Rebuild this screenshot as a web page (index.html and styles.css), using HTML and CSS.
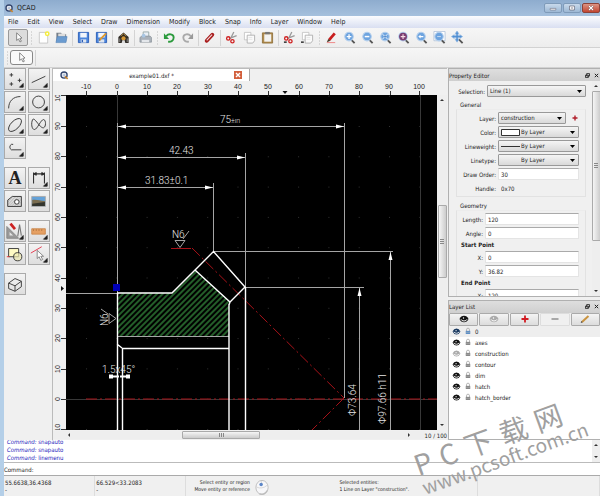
FILE: index.html
```html
<!DOCTYPE html>
<html lang="en">
<head>
    <meta charset="UTF-8">
    <meta name="viewport" content="width=device-width, initial-scale=1.0">
    <title>QCAD</title>
    <link rel="stylesheet" href="styles.css">
</head>
<body>
    <!-- Shared icons -->
    <svg class="sprite" aria-hidden="true">
        <symbol id="i-logo" viewBox="0 0 10 10"><circle cx="4.5" cy="4.5" r="3.4" fill="#fff" stroke="#34466e" stroke-width="1.5"/><path d="M4.5 2.5v4M2.5 4.5h4" stroke="#7d94bd" stroke-width=".7"/><path d="M5.5 6l3 2.8" stroke="#c58432" stroke-width="1.8"/></symbol>
        <symbol id="i-cursor" viewBox="0 0 14 14"><path d="M5 2v8.2l2-1.7 1.6 3.3 1.5-.8-1.7-3.1 2.4-.3z" fill="#fff" stroke="#666" stroke-width=".8"/></symbol>
        <symbol id="i-zoom" viewBox="0 0 14 14"><path d="M8.5 9l4 4" stroke="#555" stroke-width="2"/><circle cx="6.5" cy="6" r="4.6" fill="#6ea4df" stroke="#b4cfed" stroke-width="1.2"/></symbol>
        <symbol id="i-cut" viewBox="0 0 14 14"><path d="M9.5 1L6 8M12.5 5L5 8" stroke="#999" stroke-width="1.4"/><circle cx="3.5" cy="8" r="1.8" fill="none" stroke="#cf2020" stroke-width="1.4"/><circle cx="8" cy="11" r="1.8" fill="none" stroke="#cf2020" stroke-width="1.4"/></symbol>
        <symbol id="i-copy" viewBox="0 0 14 14"><path d="M1.500 1.500h7v8h-7z" fill="#fff" stroke="#bbb" stroke-width=".8"/><path d="M4.500 4.500h8v6l-2 2.500h-6z" fill="#fafafa" stroke="#aaa" stroke-width=".9"/><path d="M6 7h4M6 9h4" stroke="#ddd" stroke-width=".7"/></symbol>
        <symbol id="i-eye" viewBox="0 0 10 8"><path d="M.5 4Q2 .7 5 .7T9.500 4Q8 7.300 5 7.300T.5 4z" fill="currentColor"/><path d="M2 4.300Q2.600 6 5 6T8 4.300" fill="none" stroke="#fff" stroke-width="1"/><circle cx="4.500" cy="3" r=".7" fill="#fff"/></symbol>
        <symbol id="i-lock" viewBox="0 0 8 10"><path d="M2 5V3.500a2 2.300 0 0 1 4 0V5" fill="none" stroke="#aaa" stroke-width="1.100"/><path d="M1 4.800h6v4.200H1z" fill="currentColor"/><path d="M1 6.800h6" stroke="#bbb" stroke-width=".6"/></symbol>
        <symbol id="i-float" viewBox="0 0 6 6"><path d="M2 .7h3.400v3H2zM.6 2.500H4v3H.6z" fill="#ddd" stroke="#222" stroke-width="1"/></symbol>
        <symbol id="i-close" viewBox="0 0 6 6"><path d="M1 1l4 4M5 1L1 5" stroke="#222" stroke-width="1.200"/></symbol>
        <symbol id="i-corner" viewBox="0 0 22 22"><path d="M20 16v4h-4z" fill="#111"/></symbol>
    </svg>

    <div class="app">
        <!-- Title bar -->
        <header class="title-bar">
            <svg class="logo"><use href="#i-logo"/></svg>
            <h1 class="title">QCAD</h1>
            <div class="window-buttons">
                <button aria-label="Minimize"><svg viewBox="0 0 18 10"><path d="M5.500 5.500h7v2h-7z" fill="#fff" stroke="#667" stroke-width=".7"/></svg></button>
                <button aria-label="Maximize"><svg viewBox="0 0 18 10"><path d="M6 2.500h6v5H6z" fill="#fff" stroke="#556" stroke-width=".8"/><path d="M8 4.500h2v1H8z" fill="#667"/></svg></button>
                <button class="close" aria-label="Close"><svg viewBox="0 0 18 10"><path d="M6.500 2.500l5 5M11.500 2.500l-5 5" stroke="#644" stroke-width="2.400"/><path d="M6.500 2.500l5 5M11.500 2.500l-5 5" stroke="#fff" stroke-width="1.500"/></svg></button>
            </div>
        </header>

        <!-- Menu -->
        <nav class="menu-bar">
            <a href="#">File</a>
            <a href="#">Edit</a>
            <a href="#">View</a>
            <a href="#">Select</a>
            <a href="#">Draw</a>
            <a href="#">Dimension</a>
            <a href="#">Modify</a>
            <a href="#">Block</a>
            <a href="#">Snap</a>
            <a href="#">Info</a>
            <a href="#">Layer</a>
            <a href="#">Window</a>
            <a href="#">Help</a>
        </nav>

        <!-- Main toolbar -->
        <div class="toolbar">
            <button class="active" aria-label="Select"><svg><use href="#i-cursor"/></svg></button>
            <span class="handle"></span>
            <button aria-label="New"><svg viewBox="0 0 14 14"><path d="M2.500 1.500h9v11.500h-9z" fill="#fff" stroke="#bbb" stroke-width=".8"/><circle cx="11" cy="3" r="2.600" fill="#f4ec3c"/><circle cx="11" cy="3" r="1" fill="#fff"/></svg></button>
            <button aria-label="Open"><svg viewBox="0 0 14 14"><path d="M1.500 2h5l1 1.500H12V11H1.500z" fill="#777f88"/><path d="M3.500 2.800H11v4H3.500z" fill="#ddd"/><path d="M2.500 6H13l-1.200 6.500H1z" fill="#6a9bd0" stroke="#4f7fb5" stroke-width=".6"/></svg></button>
            <span class="separator"></span>
            <button aria-label="Save"><svg viewBox="0 0 14 14"><path d="M1.500 1.500h11v11h-11z" fill="#4c86dc" stroke="#2c5fb8"/><path d="M3.500 2h7v5h-7z" fill="#f3f6fb"/><path d="M4 9h6v3.500H4z" fill="#dfe6f0"/><path d="M5 9.500h1.500v2.500H5z" fill="#2c5fb8"/></svg></button>
            <button aria-label="Save as"><svg viewBox="0 0 14 14"><path d="M1.500 1.500h11v11h-11z" fill="#4c86dc" stroke="#2c5fb8"/><path d="M3.500 2h7v5h-7z" fill="#f3f6fb"/><path d="M4 9h6v3.500H4z" fill="#dfe6f0"/><path d="M5 9.500L12 2.500" stroke="#e19a2d" stroke-width="2"/><path d="M4 10.500l1-1.500 1 1z" fill="#333"/></svg></button>
            <span class="separator"></span>
            <button aria-label="Export"><svg viewBox="0 0 14 14"><path d="M1.500 13V6.500L7 1.500l5.500 5V13z" fill="#2d2923"/><path d="M4 5.500L7 3l3 2.500" fill="none" stroke="#b5873c"/><circle cx="7" cy="8" r="2.300" fill="#d59735"/><path d="M5 13l.8-3h2.400L9 13z" fill="#ddd"/><path d="M3 8v4M11 8v4" stroke="#aaa" stroke-width=".8"/></svg></button>
            <span class="separator"></span>
            <button aria-label="Print"><svg viewBox="0 0 14 14"><path d="M4.500 1h6v6h-6z" fill="#e9eff6" stroke="#9aa"/><path d="M1 7l2-1.500h9L13.500 7v5H1z" fill="#aab1b9" stroke="#858c94" stroke-width=".7"/><path d="M3 9.500h8V12H3z" fill="#e4e7eb"/><circle cx="5" cy="5" r="2" fill="#a9c6e3"/></svg></button>
            <span class="handle"></span>
            <button aria-label="Undo"><svg viewBox="0 0 14 14"><path d="M3.500 5.500C6 2.500 11.500 3 11.500 7S8 11.800 5.500 11.500" fill="none" stroke="#2b9a3c" stroke-width="2"/><path d="M1 2.500v6h5.500z" fill="#2b9a3c"/></svg></button>
            <button aria-label="Redo"><svg viewBox="0 0 14 14"><path d="M10.500 5.500C8 2.500 2.500 3 2.500 7S6 11.800 8.500 11.500" fill="none" stroke="#aaa" stroke-width="2"/><path d="M13 2.500v6H7.500z" fill="#999"/></svg></button>
            <span class="separator"></span>
            <button aria-label="Delete"><svg viewBox="0 0 14 14"><path d="M4 10.500L10 4" stroke="#a81c1c" stroke-width="4.200" stroke-linecap="round"/><path d="M4 10L9.800 3.800" stroke="#f3dada" stroke-width="1.200"/></svg></button>
            <span class="separator"></span>
            <button aria-label="Cut"><svg><use href="#i-cut"/></svg></button>
            <button aria-label="Copy"><svg><use href="#i-copy"/></svg></button>
            <button aria-label="Paste"><svg viewBox="0 0 14 14"><path d="M1.500 2h11v11h-11z" fill="#b18c4e" stroke="#86662f" stroke-width=".8"/><path d="M3.500 3.500h7.500v8H3.500z" fill="#f3f3f1"/><path d="M4.500 1h5v2.500h-5z" fill="#777"/></svg></button>
            <span class="separator"></span>
            <button aria-label="Cut with reference"><svg viewBox="0 0 14 14"><use href="#i-cut"/><path d="M1 12h3" stroke="#222" stroke-width="1.500"/></svg></button>
            <button aria-label="Copy with reference"><svg viewBox="0 0 14 14"><use href="#i-copy"/><path d="M0 12h3" stroke="#222" stroke-width="1.500"/></svg></button>
            <span class="handle"></span>
            <button aria-label="Draft"><svg viewBox="0 0 14 14"><path d="M4.500 9.500L10.500 2.500" stroke="#c81e1e" stroke-width="3"/><path d="M2 12l1.500-3.500 2.400 2z" fill="#432"/><path d="M2 12.500h9" stroke="#e66" stroke-width=".8"/></svg></button>
            <button aria-label="Zoom in"><svg viewBox="0 0 14 14"><use href="#i-zoom"/><path d="M4 6h5M6.500 3.500v5" stroke="#fff" stroke-width="1.400"/></svg></button>
            <button aria-label="Zoom out"><svg viewBox="0 0 14 14"><use href="#i-zoom"/><path d="M4 6h5" stroke="#fff" stroke-width="1.600"/></svg></button>
            <button aria-label="Auto zoom"><svg viewBox="0 0 14 14"><use href="#i-zoom"/><path d="M4 3.500l5 5M9 3.500l-5 5" stroke="#fff" stroke-width="1"/><circle cx="6.500" cy="6" r="1" fill="#4b7fc0"/></svg></button>
            <button aria-label="Zoom to selection"><svg viewBox="0 0 14 14"><use href="#i-zoom"/><circle cx="6.500" cy="6" r="4.200" fill="#7a3c70"/><path d="M4 6h5M6.500 3.500v5" stroke="#f7dce6" stroke-width="1.200"/></svg></button>
            <button aria-label="Previous view"><svg viewBox="0 0 14 14"><use href="#i-zoom"/><path d="M3.500 6l2.500-2v1.300h3v1.400H6V8z" fill="#fff"/></svg></button>
            <button aria-label="Window zoom"><svg viewBox="0 0 14 14"><path d="M1 .500h12v10H1z" fill="#fff" stroke="#a9bdd6" stroke-width=".8"/><use href="#i-zoom"/><path d="M4.500 6h4" stroke="#cfe0f4"/></svg></button>
            <button aria-label="Pan zoom"><svg viewBox="0 0 14 14"><path d="M8.500 9l4 4" stroke="#555" stroke-width="2"/><path d="M6.500 0l2 3h-1v2h2V4l3 2-3 2V7h-2v2h1l-2 3-2-3h1V7h-2v1l-3-2 3-2v1h2V3h-1z" fill="#4f8fd3" stroke="#94b9e2" stroke-width=".8"/></svg></button>
        </div>

        <!-- Options toolbar -->
        <div class="toolbar options">
            <span class="handle"></span>
            <button class="reset" aria-label="Reset"><svg><use href="#i-cursor"/></svg></button>
            <span class="separator"></span>
        </div>

        <main class="workspace">
            <!-- Tool palette -->
            <aside class="palette">
                <div class="tool-group">
                    <button aria-label="Point"><svg viewBox="0 0 22 22"><path d="M5 6.500h4M7 4.500v4M5 16.500h4M7 14.500v4M14 12.500h4M16 10.500v4"/><use href="#i-corner"/></svg></button>
                    <button aria-label="Line"><svg viewBox="0 0 22 22"><path d="M3 15L18 8"/><use href="#i-corner"/></svg></button>
                    <button aria-label="Arc"><svg viewBox="0 0 22 22"><path d="M4 18C4 10 9 5 17 5"/><use href="#i-corner"/></svg></button>
                    <button aria-label="Circle"><svg viewBox="0 0 22 22"><circle cx="10.500" cy="11" r="6.500"/><use href="#i-corner"/></svg></button>
                    <button aria-label="Ellipse"><svg viewBox="0 0 22 22"><ellipse cx="11" cy="11" rx="9" ry="4.500" transform="rotate(-45 11 11)"/><use href="#i-corner"/></svg></button>
                    <button aria-label="Spline"><svg viewBox="0 0 22 22"><path d="M4 5C2 9 3 16 6 16S13 5 16 5S19 15 15 14S6 2 4 5z"/><use href="#i-corner"/></svg></button>
                    <button aria-label="Polyline"><svg viewBox="0 0 22 22"><path d="M9 7H7a3.500 3.500 0 0 0 0 6h11"/><use href="#i-corner"/></svg></button>
                </div>
                <div class="tool-group">
                    <button class="text-tool">A</button>
                    <button aria-label="Dimension"><svg viewBox="0 0 22 22"><path d="M5 17V5M17 17V5M5 6.500h12" stroke-width="1.200"/><path d="M5 6.500l3-1.500v3zM17 6.500L14 5v3z" fill="#222"/><use href="#i-corner"/></svg></button>
                    <button aria-label="Hatch"><svg viewBox="0 0 22 22"><path d="M3 17v-7l5-4h10v11z" fill="url(#metal)"/><circle cx="13" cy="12" r="2.500" fill="#fff"/></svg></button>
                    <button aria-label="Image"><svg viewBox="0 0 22 22"><path d="M3 6h15v11H3z" fill="#64a2d9" stroke="#aaa"/><path d="M3.500 10c5-1 8 1 14 1v5.500h-14z" fill="#7a6d50" stroke="none"/><path d="M3.500 14l14-2v4.500h-14z" fill="#33352e" stroke="none"/></svg></button>
                </div>
                <div class="tool-group">
                    <button aria-label="Modify"><svg viewBox="0 0 22 22"><path d="M2 6v13h13z" fill="#999" stroke="#888"/><path d="M5 12v4h4z" fill="#e4e4e4" stroke="none"/><path d="M6 3l5 6" stroke="#c22" stroke-width="3"/><path d="M16 4l-2 13M16 4l2 12" stroke="#777" stroke-width="1.200"/><use href="#i-corner"/></svg></button>
                    <button aria-label="Measure"><svg viewBox="0 0 22 22"><path d="M3 8.500h15v6H3z" fill="#e5a063" stroke="#c67f40" stroke-width=".8"/><path d="M5 9v2M8 9v2M11 9v2M14 9v2" stroke="#96602e" stroke-width=".6"/><use href="#i-corner"/></svg></button>
                    <button aria-label="Block"><svg viewBox="0 0 22 22"><path d="M4 5h11v9H4z" fill="#fffbc4"/><circle cx="14" cy="14" r="4.500" fill="#eee9b0" fill-opacity=".7"/><path d="M2 14h3" stroke="#e33"/></svg></button>
                    <button aria-label="Select tools"><svg viewBox="0 0 22 22"><path d="M2 10L14 3" stroke="#e33248"/><path d="M9 7v9l2.200-2 1.800 4 2-1-2-3.500h3z" fill="#fff" stroke="#666" stroke-width=".8"/><use href="#i-corner"/></svg></button>
                </div>
                <div class="tool-group">
                    <button aria-label="Solid"><svg viewBox="0 0 22 22"><path d="M4 10l7-5 7 3v6l-7 5-7-3zM4 10l7 3 7-5M11 13v6"/></svg></button>
                </div>
            </aside>

            <!-- Document window -->
            <section class="document">
                <div class="tab-bar">
                    <div class="tab">
                        <svg class="logo"><use href="#i-logo"/></svg>
                        <span>example01.dxf *</span>
                        <button aria-label="Close tab"><svg viewBox="0 0 8 8"><path d="M2 2l4 4M6 2L2 6" stroke="#fff" stroke-width="1.400"/></svg></button>
                    </div>
                </div>
                <div class="view">
                    <svg class="ruler-top">
                        <path d="M20.500 10v5M51.500 10v5M81.500 10v5M111.500 10v5M142.500 10v5M172.500 10v5M202.500 10v5M233.500 10v5M263.500 10v5M293.500 10v5M324.500 10v5M353.500 10v5" stroke="#333"/>
                        <path d="M216.500 10h5l-2.500 3z" fill="#111"/>
                        <g text-anchor="middle">
                            <text x="20" y="8">-10</text><text x="51" y="8">0</text><text x="81" y="8">10</text><text x="111" y="8">20</text>
                            <text x="142" y="8">30</text><text x="172" y="8">40</text><text x="202" y="8">50</text><text x="233" y="8">60</text>
                            <text x="263" y="8">70</text><text x="293" y="8">80</text><text x="323" y="8">90</text><text x="353" y="8">100</text>
                        </g>
                    </svg>
                    <svg class="ruler-left">
                        <path d="M8 .5h5M8 31.500h5M8 61.500h5M8 92.500h5M8 122.500h5M8 152.500h5M8 183.500h5M8 213.500h5M8 243.500h5M8 274.500h5M8 304.500h5M8 334.500h5" stroke="#333"/>
                        <path d="M8 191v5l3-2.500z" fill="#111"/>
                        <g text-anchor="middle">
                            <text transform="translate(7 1) rotate(-90)">100</text><text transform="translate(7 31) rotate(-90)">90</text>
                            <text transform="translate(7 61) rotate(-90)">80</text><text transform="translate(7 92) rotate(-90)">70</text>
                            <text transform="translate(7 122) rotate(-90)">60</text><text transform="translate(7 152) rotate(-90)">50</text>
                            <text transform="translate(7 183) rotate(-90)">40</text><text transform="translate(7 213) rotate(-90)">30</text>
                            <text transform="translate(7 243) rotate(-90)">20</text><text transform="translate(7 274) rotate(-90)">10</text>
                            <text transform="translate(7 304) rotate(-90)">0</text><text transform="translate(7 334) rotate(-90)">-10</text>
                        </g>
                    </svg>

                    <svg class="drawing">
                        <defs>
                            <pattern id="hatch" width="4" height="4" patternUnits="userSpaceOnUse" patternTransform="rotate(45)"><path d="M1 0v4" stroke="#36903f" stroke-width="1.300"/></pattern>
                            <pattern id="metal" width="3" height="3" patternUnits="userSpaceOnUse"><path d="M0 0h3v3H0z" fill="#ddd"/><path d="M0 3l3-3" stroke="#999" stroke-width=".6"/></pattern>
                            <pattern id="grid" x="20" y="31" width="30.300" height="30.300" patternUnits="userSpaceOnUse"><path d="M0 0h1v1H0z" fill="#333"/></pattern>
                        </defs>
                        <rect class="paper" width="100%" height="100%"/>
                        <rect width="100%" height="100%" fill="url(#grid)"/>
                        <path class="axis" d="M51.500 0v340M354.500 0v340M0 304.500h371"/>

                        <!-- Hatched section -->
                        <path d="M51 198h55l23-23 35 32-1 3v31H51z" fill="url(#hatch)"/>

                        <!-- Center lines -->
                        <path class="center" d="M20 304h360M126 153L278 303M278 303L244 337"/>
                        <path class="center solid" d="M105 153.500h20M51.500 292v24"/>

                        <!-- Dimension lines -->
                        <path class="dim" d="M51.500 28v312M0 198.500h51M51 31.500h227M51 62.500h128M51 92.500h96M278.500 28v275M179.500 58v134M147.500 88v68M147 156.500h180M179 192.500h119M293.500 192v148M324.500 156v184M51 241.500h112"/>
                        <path class="arrow" d="M52 31.500l8-2v4zM278 31.500l-8-2v4zM52 62.500l8-2v4zM179 62.500l-8-2v4zM52 92.500l8-2v4zM147 92.500l-8-2v4zM293.500 193l-2 8h4zM324.500 157l-2 8h4z"/>
                        <path class="arrow" d="M43 279.500h4v1h6v2h-6v1h-4zM64 279.500h-4v1h-6v2h6v1h4z"/>

                        <!-- Contour -->
                        <path class="contour" d="M51.500 198v142M51 198h55L147.500 156.500 179 192l-15 15-35-32M164 207l-1 3M163 209v131M179.500 192v148M56.500 253v87M51 249l5 4M56 253.500h107"/>

                        <!-- Surface marks -->
                        <path class="dim" d="M109 145.500h10l-5 7zM117 144l6-8M43 218.500v10l7-5zM42 219l-7-5"/>

                        <g class="labels">
                            <text x="154" y="28">75<tspan class="tolerance">±ın</tspan></text>
                            <text x="103" y="59">42.43</text>
                            <text x="79" y="89">31.83±0.1</text>
                            <text x="106" y="143">N6</text>
                            <text x="36" y="278">1.5x45°</text>
                            <text transform="translate(42 231) rotate(-90)">N6</text>
                            <text transform="translate(290 321) rotate(-90)">Φ73.64</text>
                            <text transform="translate(320 329) rotate(-90)">Φ97.66 h11</text>
                        </g>
                        <path class="grip" d="M47 189h7v7h-7z"/>
                    </svg>

                    <div class="scroll vertical doc-vertical">
                        <i class="up"></i><span class="before"></span><b class="thumb"></b><span class="after"></span><i class="down"></i>
                    </div>
                    <div class="doc-bottom">
                        <div class="scroll horizontal">
                            <i class="left"></i><span class="before"></span><b class="thumb"></b><span class="after"></span><i class="right"></i>
                        </div>
                        <span>10 / 100</span>
                    </div>
                </div>
            </section>

            <aside class="docks">
                <!-- Property editor -->
                <section class="dock property-dock">
                    <header class="dock-title">
                        <h2>Property Editor</h2>
                        <button aria-label="Float"><svg><use href="#i-float"/></svg></button>
                        <button aria-label="Close"><svg><use href="#i-close"/></svg></button>
                    </header>
                    <div class="property-body">
                        <form class="properties">
                            <div class="selection-row">
                                <label for="selection">Selection:</label>
                                <select id="selection"><option>Line (1)</option></select>
                            </div>
                            <h3>General</h3>
                            <div class="group general">
                                <label for="layer">Layer:</label>
                                <div class="layer-field">
                                    <select id="layer"><option>construction</option></select>
                                    <button type="button" aria-label="Add layer"><svg viewBox="0 0 8 8"><path d="M1.500 4h5M4 1.500v5" stroke="#b11f2b" stroke-width="1.400"/></svg></button>
                                </div>
                                <label for="color">Color:</label>
                                <select id="color" class="swatch"><option>By Layer</option></select>
                                <label for="lineweight">Lineweight:</label>
                                <select id="lineweight" class="weight"><option>By Layer</option></select>
                                <label for="linetype">Linetype:</label>
                                <select id="linetype" class="type"><option>By Layer</option></select>
                                <label for="order">Draw Order:</label>
                                <input id="order" type="text" value="30">
                                <label for="handle">Handle:</label>
                                <input id="handle" type="text" value="0x70" readonly>
                            </div>
                            <h3>Geometry</h3>
                            <div class="group geometry">
                                <label for="length">Length:</label>
                                <input id="length" type="text" value="120">
                                <label for="angle">Angle:</label>
                                <input id="angle" type="text" value="0">
                                <h4>Start Point</h4>
                                <label for="start-x">X:</label>
                                <input id="start-x" type="text" value="0">
                                <label for="start-y">Y:</label>
                                <input id="start-y" type="text" value="36.82">
                                <h4>End Point</h4>
                                <label for="end-x">X:</label>
                                <input id="end-x" type="text" value="120">
                            </div>
                        </form>
                        <div class="scroll vertical property-scroll">
                            <i class="up"></i><b class="thumb"></b><span class="after"></span><i class="down"></i>
                        </div>
                    </div>
                </section>

                <!-- Layer list -->
                <section class="dock layer-dock">
                    <header class="dock-title">
                        <h2>Layer List</h2>
                        <button aria-label="Float"><svg><use href="#i-float"/></svg></button>
                        <button aria-label="Close"><svg><use href="#i-close"/></svg></button>
                    </header>
                    <div class="layer-buttons">
                        <button aria-label="Show all"><svg><use href="#i-eye"/></svg></button>
                        <button class="dim-icon" aria-label="Hide all"><svg><use href="#i-eye"/></svg></button>
                        <button aria-label="Add"><svg viewBox="0 0 10 8"><path d="M1.500 4h7M5 .5v7" stroke="#d11b22" stroke-width="1.800"/></svg></button>
                        <button class="flat" aria-label="Remove"><svg viewBox="0 0 10 8"><path d="M1.500 4h7" stroke="#888" stroke-width="1.400"/></svg></button>
                        <button aria-label="Edit"><svg viewBox="0 0 10 8"><path d="M2 7L8.500 1" stroke="#c9933f" stroke-width="2"/><path d="M.7 8l.8-2 1.200 1.200z" fill="#333"/></svg></button>
                    </div>
                    <ul class="layers">
                        <li class="current"><svg class="eye"><use href="#i-eye"/></svg><svg class="lock"><use href="#i-lock"/></svg>0</li>
                        <li><svg class="eye"><use href="#i-eye"/></svg><svg class="lock"><use href="#i-lock"/></svg>axes</li>
                        <li class="hidden-layer"><svg class="eye"><use href="#i-eye"/></svg><svg class="lock"><use href="#i-lock"/></svg>construction</li>
                        <li><svg class="eye"><use href="#i-eye"/></svg><svg class="lock"><use href="#i-lock"/></svg>contour</li>
                        <li><svg class="eye"><use href="#i-eye"/></svg><svg class="lock"><use href="#i-lock"/></svg>dim</li>
                        <li><svg class="eye"><use href="#i-eye"/></svg><svg class="lock"><use href="#i-lock"/></svg>hatch</li>
                        <li><svg class="eye"><use href="#i-eye"/></svg><svg class="lock"><use href="#i-lock"/></svg>hatch_border</li>
                    </ul>
                </section>
            </aside>
        </main>

        <!-- Command line -->
        <section class="command">
            <div class="history">
                <div class="history-lines">
                    <p><em>Command:</em> snapauto</p>
                    <p><em>Command:</em> snapauto</p>
                    <p><em>Command:</em> linemenu</p>
                </div>
                <div class="scroll vertical"><i class="up"></i><i class="down"></i></div>
            </div>
            <div class="prompt">
                <label for="command">Command:</label>
                <input id="command" type="text">
            </div>
        </section>

        <!-- Status bar -->
        <footer class="status-bar">
            <div class="coords"><p>55.6638,36.4368</p><p>-</p></div>
            <div class="coords"><p>66.529&lt;33.2083</p><p>-</p></div>
            <div class="mouse">
                <div><p>Select entity or region</p><p>Move entity or reference</p></div>
                <svg viewBox="0 0 16 18"><ellipse cx="8" cy="9.500" rx="7" ry="8" fill="#f7f7f9" stroke="#aaa" stroke-width=".8"/><path d="M14 13a7 8 0 0 1-9 3.500" fill="none" stroke="#bbb" stroke-width="1.500"/><path d="M1.500 9Q8 12 14 7M7 2l1 4" fill="none" stroke="#bbb" stroke-width=".6"/><circle cx="7" cy="6" r="2" fill="#5c86c8"/></svg>
            </div>
            <div class="selected"><p>Selected entities:</p><p>1 Line on Layer "construction".</p></div>
            <div></div>
        </footer>

        <div class="watermark">
            <p class="site"><span>P</span><span>C</span><span>下</span><span>载</span><span>网</span></p>
            <p class="url">www.pcsoft.com.cn</p>
        </div>
    </div>
</body>
</html>
```
FILE: styles.css
```css
* {
    box-sizing: border-box;
}

body {
    margin: 0;
    font-family: "DejaVu Sans Condensed", "DejaVu Sans", sans-serif;
    font-size: 6px;
    color: #222;
    background-color: #f0f0f0;
}

h1, h2, h3, h4, p, ul {
    margin: 0;
    padding: 0;
    font-size: inherit;
    font-weight: normal;
}

button, input, select {
    margin: 0;
    padding: 0;
    border: none;
    background: none;
    font: inherit;
    color: inherit;
    min-width: 0;
}

svg {
    display: block;
}

.sprite {
    position: absolute;
    width: 0;
    height: 0;
}

.app {
    position: relative;
    display: flex;
    flex-direction: column;
    height: 100vh;
    overflow: hidden;
    border-left: 4px solid #b4cfe8;
}

/* Title bar */
.title-bar {
    display: flex;
    align-items: center;
    gap: 3px;
    height: 16px;
    margin-left: -4px;
    padding-left: 5px;
    background: linear-gradient(#8eacce, #a5c0dd);
    font-size: 7px;
}

.logo {
    width: 9px;
    height: 9px;
}

.window-buttons {
    display: flex;
    gap: 1px;
    margin-left: auto;
}

.window-buttons button {
    width: 18px;
    height: 10px;
    border: 1px solid #7f9bb9;
    border-radius: 2px;
    background: linear-gradient(#c8d9eb, #9db8d4);
}

.window-buttons .close {
    border-color: #8c4238;
    background: linear-gradient(#dc9484, #c34631);
}

.window-buttons svg {
    width: 100%;
    height: 100%;
}

/* Menu */
.menu-bar {
    display: flex;
    align-items: center;
    gap: 9px;
    height: 12px;
    padding-left: 4px;
    background: linear-gradient(#fbfcfe, #d9dff1);
    font-size: 7px;
}

.menu-bar a {
    color: #222;
    text-decoration: none;
}

/* Toolbars */
.toolbar {
    display: flex;
    align-items: center;
    height: 20px;
    padding-left: 4px;
    border-bottom: 1px solid #d2d2d2;
    background: linear-gradient(#f6f6f6, #ededed);
}

.toolbar button {
    display: flex;
    align-items: center;
    justify-content: center;
    width: 18px;
    height: 17px;
}

.toolbar svg {
    width: 13px;
    height: 13px;
}

.toolbar .active {
    width: 20px;
    border: 1px solid #999;
    border-radius: 2px;
    background-color: #dcdcdc;
}

.separator {
    width: 4px;
    height: 16px;
    background: linear-gradient(#d4d4d4, #d4d4d4) center / 1px 100% no-repeat;
}

.handle {
    width: 6px;
    height: 16px;
    background: radial-gradient(#bbb 1px, transparent 1px) center / 3px 3px repeat-y;
}

.options {
    padding-left: 0;
}

.options .reset {
    width: 23px;
    height: 15px;
    border: 1px solid #888;
    border-radius: 3px;
    background-color: #fafafa;
}

.workspace {
    display: flex;
    flex: 1;
    min-height: 0;
}

/* Tool palette */
.palette {
    display: flex;
    flex-direction: column;
    gap: 8px;
    width: 48px;
}

.tool-group {
    display: grid;
    grid-template-columns: 22px 22px;
    grid-auto-rows: 22px;
    gap: 1px 2px;
}

.tool-group button {
    border: 1px solid #aaa;
    background: linear-gradient(#f3f3f3, #dedede);
}

.tool-group svg {
    width: 20px;
    height: 20px;
    fill: none;
    stroke: #333;
    stroke-width: 1;
}

.text-tool {
    font-family: "Liberation Serif", serif;
    font-size: 18px;
    font-weight: bold;
    line-height: 20px;
    text-align: center;
}

/* Document */
.document {
    display: flex;
    flex: 1;
    flex-direction: column;
    min-width: 0;
    border-left: 1px solid #bbb;
}

.tab-bar {
    height: 13px;
    border-top: 1px solid #bbb;
}

.tab {
    display: flex;
    align-items: center;
    justify-content: space-between;
    width: 50%;
    height: 100%;
    padding: 0 7px;
    border-right: 1px solid #aaa;
    background-color: #fff;
}

.tab button {
    width: 8px;
    height: 8px;
    background-color: #d2603d;
}

.view {
    display: grid;
    grid-template-columns: 13px 1fr 10px;
    grid-template-rows: 14px 1fr 10px;
    flex: 1;
    min-height: 0;
}

.ruler-top, .ruler-left {
    width: 100%;
    height: 100%;
    overflow: hidden;
    font-family: "Liberation Sans", sans-serif;
    font-size: 7px;
    fill: #222;
}

.ruler-top {
    grid-area: 1 / 2;
}

.ruler-left {
    grid-area: 2 / 1;
}

.drawing {
    grid-area: 2 / 2;
    width: 100%;
    height: 100%;
    overflow: hidden;
}

.paper {
    fill: #000;
}

.drawing .axis {
    stroke: #383838;
}

.drawing .center {
    fill: none;
    stroke: #a81219;
    stroke-dasharray: 11 3 2 3;
}

.drawing .center.solid {
    stroke-dasharray: none;
}

.drawing .dim {
    fill: none;
    stroke: #a5a5a5;
}

.drawing .arrow {
    fill: #fff;
}

.drawing .contour {
    fill: none;
    stroke: #fff;
    stroke-width: 1.4;
}

.drawing .grip {
    fill: #0000b8;
}

.labels {
    font-family: Roboto, sans-serif;
    font-size: 10px;
    font-weight: 300;
    fill: #e6e6e6;
}

.labels .tolerance {
    font-size: 7px;
}

/* Scroll bars */
.scroll {
    display: flex;
    align-items: center;
    background-color: #eee;
}

.scroll.vertical {
    flex-direction: column;
    padding: 4px 0;
}

.scroll i {
    border: 2px solid transparent;
}

.scroll .up {
    border-top: none;
    border-bottom-color: #333;
}

.scroll .down {
    border-bottom: none;
    border-top-color: #333;
}

.scroll .left {
    border-left: none;
    border-right-color: #333;
}

.scroll .right {
    border-right: none;
    border-left-color: #333;
}

.thumb {
    border: 1px solid #aaa;
    border-radius: 1px;
}

.vertical .thumb {
    width: 9px;
    background: repeating-linear-gradient(#888 0 1px, transparent 1px 2px) center / 4px 5px no-repeat, linear-gradient(90deg, #f5f5f5, #ccc);
}

.horizontal .thumb {
    height: 8px;
    background: repeating-linear-gradient(90deg, #888 0 1px, transparent 1px 2px) center / 5px 4px no-repeat, linear-gradient(#f5f5f5, #ccc);
}

.doc-vertical {
    grid-area: 1 / 3 / 3 / 4;
    margin-top: 14px;
}

.doc-vertical .before {
    flex: 104;
}

.doc-vertical .thumb {
    flex: 71;
}

.doc-vertical .after {
    flex: 146;
}

.doc-bottom {
    grid-area: 3 / 1 / 4 / 4;
    display: flex;
    align-items: center;
}

.doc-bottom .scroll {
    flex: 1;
    padding: 0 15px;
}

.horizontal .before {
    flex: 112;
}

.horizontal .thumb {
    flex: 76;
}

.horizontal .after {
    flex: 147;
}

/* Docks */
.docks {
    display: flex;
    flex-direction: column;
    gap: 3px;
    width: 153px;
    padding-left: 1px;
}

.dock {
    display: flex;
    flex-direction: column;
    flex-basis: 0;
    min-height: 0;
    border: 1px solid #b0b0b0;
    border-right: none;
}

.property-dock {
    flex-grow: 23;
}

.layer-dock {
    flex-grow: 14;
}

.dock-title {
    display: flex;
    align-items: center;
    flex: none;
    gap: 4px;
    height: 12px;
    padding-right: 1px;
    background: linear-gradient(#dedede, #cfcfcf);
}

.dock-title h2 {
    flex: 1;
}

.dock-title svg {
    width: 5px;
    height: 5px;
}

.property-body {
    display: flex;
    flex: 1;
    min-height: 0;
}

.properties {
    flex: 1;
    padding: 4px 6px 0 7px;
    overflow: hidden;
}

.properties label {
    text-align: right;
}

.properties select, .properties input {
    width: 100%;
    height: 12px;
    padding-left: 2px;
    border: 1px solid #ccc;
    line-height: 10px;
}

.properties input {
    border-color: #aaa #e4e4e4 #e4e4e4;
    background-color: #fff;
}

.properties input[readonly] {
    border-color: transparent;
    background: none;
}

.properties select {
    appearance: none;
    border-color: #999;
    border-radius: 1px;
    background: url("data:image/svg+xml,%3Csvg xmlns='http://www.w3.org/2000/svg' viewBox='0 0 5 3'%3E%3Cpath d='M0 0h5L2.500 3z'/%3E%3C/svg%3E") right 3px center / 5px 3px no-repeat, linear-gradient(#f5f5f5, #d9d9d9);
}

.properties .swatch, .properties .weight, .properties .type {
    padding-left: 22px;
}

.properties .swatch {
    background: url("data:image/svg+xml,%3Csvg xmlns='http://www.w3.org/2000/svg' viewBox='0 0 5 3'%3E%3Cpath d='M0 0h5L2.500 3z'/%3E%3C/svg%3E") right 3px center / 5px 3px no-repeat, url("data:image/svg+xml,%3Csvg xmlns='http://www.w3.org/2000/svg' viewBox='0 0 19 7'%3E%3Cpath d='M.5.5h18v6H.5z' fill='white' stroke='%23333'/%3E%3C/svg%3E") 2px center / 19px 7px no-repeat, linear-gradient(#f5f5f5, #d9d9d9);
}

.properties .weight {
    background: url("data:image/svg+xml,%3Csvg xmlns='http://www.w3.org/2000/svg' viewBox='0 0 5 3'%3E%3Cpath d='M0 0h5L2.500 3z'/%3E%3C/svg%3E") right 3px center / 5px 3px no-repeat, linear-gradient(#333, #333) 2px center / 19px 1px no-repeat, linear-gradient(#f5f5f5, #d9d9d9);
}

.selection-row {
    display: grid;
    grid-template-columns: 29px 1fr;
    align-items: center;
    gap: 2px;
    margin-bottom: 3px;
}

.properties h3 {
    padding-left: 4px;
    line-height: 9px;
}

.group {
    display: grid;
    align-items: center;
    gap: 2px;
    padding: 2px 6px 2px 0;
    border: 1px solid #e2e2e2;
    border-top-color: #ececec;
}

.general {
    grid-template-columns: 39px 1fr;
    margin-bottom: 4px;
}

.geometry {
    grid-template-columns: 26px 1fr;
}

.group h4 {
    grid-column: 1 / 3;
    padding-left: 4px;
    font-weight: bold;
    line-height: 8px;
}

.layer-field {
    display: flex;
    align-items: center;
    gap: 5px;
    padding-right: 1px;
}

.layer-field button svg {
    width: 8px;
    height: 8px;
}

.property-scroll {
    width: 8px;
}

.property-scroll .thumb {
    flex: 150;
    margin-top: 4px;
}

.property-scroll .after {
    flex: 50;
}

/* Layer list */
.layer-buttons {
    display: flex;
    flex: none;
    gap: 1px;
    height: 13px;
}

.layer-buttons button {
    display: flex;
    align-items: center;
    justify-content: center;
    flex: 1;
    border: 1px solid #aaa;
    border-radius: 1px;
    background: linear-gradient(#f4f4f4, #dcdcdc);
    color: #111;
}

.layer-buttons .dim-icon {
    color: #aaa;
}

.layer-buttons .flat {
    border-color: #ddd;
    background: #f0f0f0;
}

.layer-buttons svg {
    width: 10px;
    height: 8px;
}

.layers {
    flex: 1;
    list-style: none;
    background-color: #fff;
}

.layers li {
    display: flex;
    align-items: center;
    gap: 4px;
    height: 11px;
    padding-left: 3px;
    color: #222;
}

.layers .current {
    background-color: #eee;
}

.layers .eye {
    width: 9px;
    height: 7px;
    color: #111;
}

.layers .lock {
    width: 6px;
    height: 8px;
    color: #888;
}

.layers .current .eye {
    color: #17375e;
}

.layers .current .lock {
    color: #5d8fc6;
}

.layers .hidden-layer .eye {
    color: #aaa;
}

/* Command line */
.history {
    display: flex;
    height: 23px;
    border-bottom: 1px solid #bbb;
    background-color: #fff;
}

.history-lines {
    display: flex;
    flex: 1;
    flex-direction: column;
    justify-content: flex-end;
    padding-left: 3px;
    overflow: hidden;
    line-height: 8px;
    color: #2222bb;
}

.history .scroll {
    justify-content: space-between;
    width: 8px;
}

.prompt {
    display: flex;
    align-items: center;
    height: 13px;
    border-bottom: 1px solid #aaa;
    background-color: #fff;
}

.prompt input {
    flex: 1;
    height: 100%;
}

/* Status bar */
.status-bar {
    display: grid;
    grid-template-columns: 15fr 15fr 25fr 23fr 20fr;
    height: 20px;
    font-size: 5px;
    line-height: 7px;
}

.status-bar > div {
    padding: 3px 1px;
    border-right: 1px solid #ddd;
}

.status-bar .coords {
    font-size: 6px;
}

.status-bar .mouse {
    display: flex;
    gap: 5px;
    padding-left: 8px;
    border-right: none;
    text-align: right;
}

.mouse svg {
    width: 14px;
    height: 16px;
}

/* Watermark */
.watermark {
    position: absolute;
    right: -2px;
    bottom: -1px;
    width: 176px;
    color: #a0a0a0;
    font-family: "Noto Sans CJK SC", sans-serif;
    font-weight: 500;
    transform: rotate(-20deg);
    transform-origin: left bottom;
}

.site {
    display: flex;
    gap: 9px;
    font-size: 28px;
    line-height: 28px;
}

.url {
    font-size: 19px;
    line-height: 20px;
}
```
